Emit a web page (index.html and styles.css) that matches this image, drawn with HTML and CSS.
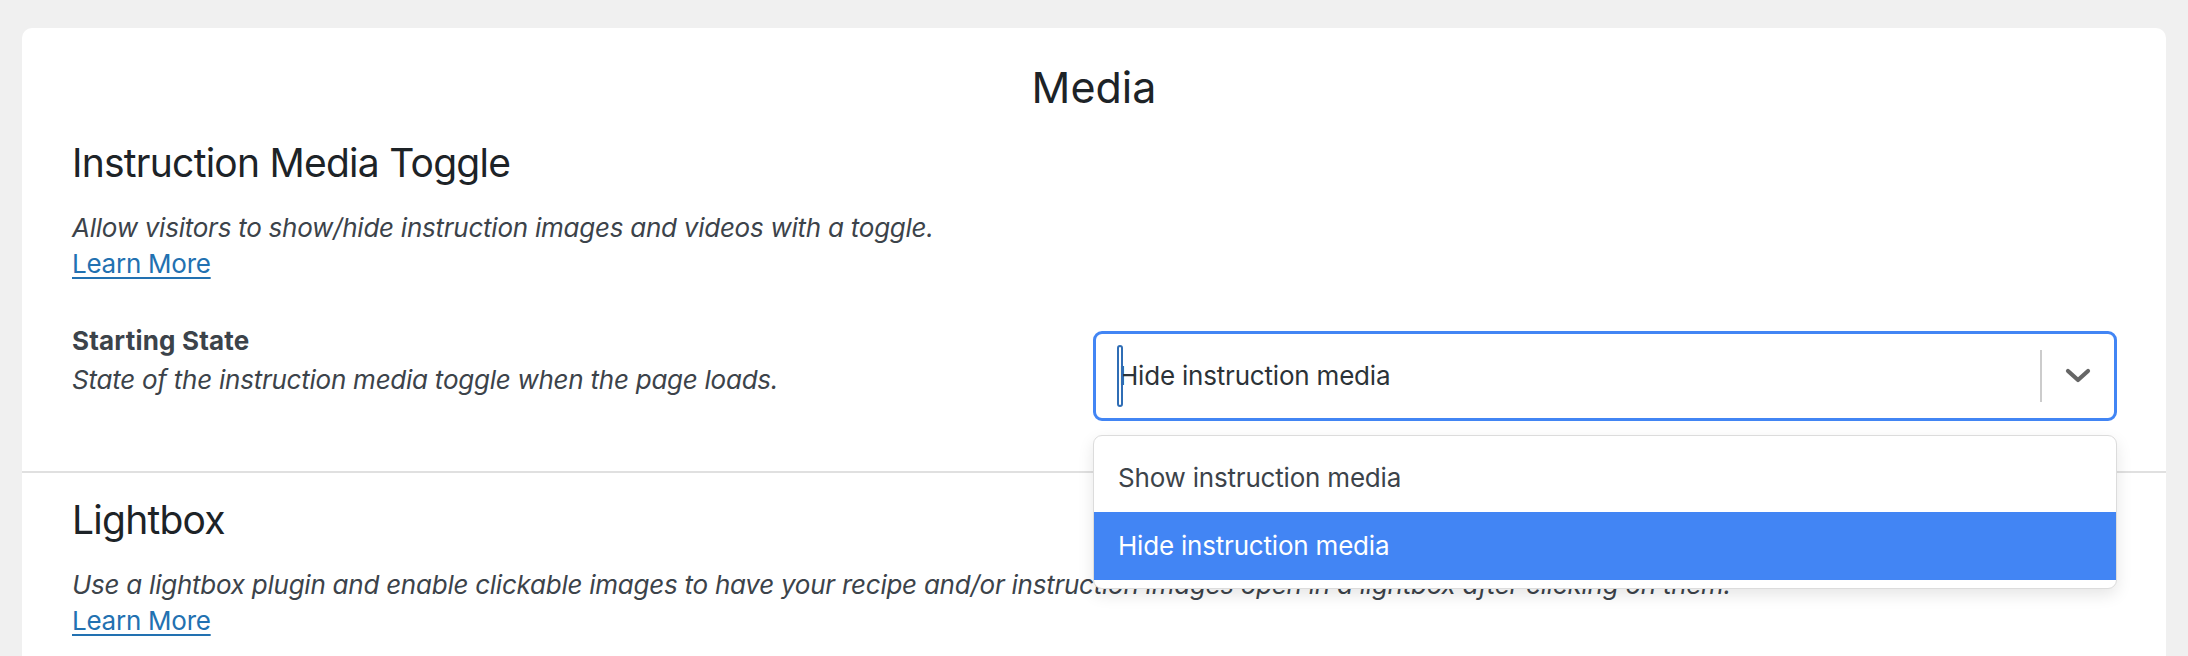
FILE: index.html
```html
<!DOCTYPE html>
<html lang="en">
<head>
    <meta charset="UTF-8">
    <title>Media Settings</title>
    <link rel="stylesheet" href="styles.css">
</head>
<body>
    <div class="card">
        <h1 class="card-title">Media</h1>

        <section class="settings-section">
            <h2>Instruction Media Toggle</h2>
            <p class="section-desc">
                Allow visitors to show/hide instruction images and videos with a toggle.<br>
                <a href="#">Learn More</a>
            </p>

            <div class="setting-row">
                <div class="setting-info">
                    <div class="setting-label">Starting State</div>
                    <div class="setting-desc">State of the instruction media toggle when the page loads.</div>
                </div>
                <div class="select-wrap">
                    <div class="select-control">
                        <div class="select-value">
                            <span class="select-input"></span>
                            Hide instruction media
                        </div>
                        <span class="select-separator"></span>
                        <div class="select-indicator">
                            <svg width="26" height="16" viewBox="0 0 26 16">
                                <path d="M3 3 L13 12 L23 3" fill="none" stroke="#666" stroke-width="4.2" stroke-linecap="round" stroke-linejoin="round"/>
                            </svg>
                        </div>
                    </div>
                    <div class="select-menu">
                        <div class="select-option">Show instruction media</div>
                        <div class="select-option selected">Hide instruction media</div>
                    </div>
                </div>
            </div>
        </section>

        <section class="settings-section">
            <h2>Lightbox</h2>
            <p class="section-desc">
                Use a lightbox plugin and enable clickable images to have your recipe and/or instruction images open in a lightbox after clicking on them.<br>
                <a href="#">Learn More</a>
            </p>
        </section>
    </div>
</body>
</html>
```

FILE: styles.css
```css
body {
    margin: 0;
    padding: 28px 22px 0;
    background-color: #f0f0f0;
    font-family: Inter, "Noto Sans", sans-serif;
    color: #3c434a;
}
.card {
    background-color: #ffffff;
    border-radius: 10px;
    padding-top: 30px;
    min-height: 700px;
}
.card-title {
    margin: 0;
    text-align: center;
    font-size: 43px;
    font-weight: 400;
    line-height: 58px;
    color: #1d2327;
}
.settings-section {
    padding: 22px 49px 50px 50px;
}
.settings-section + .settings-section {
    border-top: 2px solid #e0e0e0;
}
.settings-section h2 {
    margin: 0;
    font-size: 39px;
    font-weight: 400;
    line-height: 50px;
    letter-spacing: -0.75px;
    color: #1d2327;
}
.section-desc {
    margin: 22px 0 0;
    font-size: 26px;
    line-height: 36px;
    font-style: italic;
    letter-spacing: -0.25px;
}
.section-desc a {
    color: #2271b1;
    font-style: normal;
    text-decoration-thickness: 2px;
    text-underline-offset: 4px;
}
.setting-row {
    display: flex;
    align-items: flex-start;
    margin-top: 39px;
}
.setting-info {
    flex: 1;
}
.setting-label {
    font-size: 26px;
    font-weight: 700;
    line-height: 39px;
    letter-spacing: 0.2px;
}
.setting-desc {
    font-size: 26px;
    font-style: italic;
    line-height: 39px;
    letter-spacing: -0.25px;
}
.select-wrap {
    position: relative;
    width: 1024px;
    margin-top: 10px;
}
.select-control {
    display: flex;
    align-items: center;
    box-sizing: border-box;
    height: 90px;
    border: 3px solid #4285f4;
    border-radius: 9px;
    background-color: #ffffff;
}
.select-value {
    position: relative;
    flex: 1;
    padding-left: 23px;
    font-size: 26px;
    line-height: 36px;
    letter-spacing: -0.2px;
    color: #2c3338;
}
.select-input {
    position: absolute;
    left: 21px;
    top: -13px;
    box-sizing: border-box;
    width: 6px;
    height: 62px;
    border: 2px solid #2f6db5;
    border-radius: 3px;
}
.select-separator {
    width: 2px;
    height: 52px;
    background-color: #cccccc;
}
.select-indicator {
    display: flex;
    align-items: center;
    justify-content: center;
    width: 72px;
    height: 100%;
}
.select-menu {
    position: absolute;
    top: 104px;
    left: 0;
    right: 0;
    z-index: 10;
    padding: 8px 0;
    border: 1px solid #dcdcdc;
    border-radius: 9px;
    background-color: #ffffff;
    box-shadow: 0 6px 16px rgba(0, 0, 0, 0.1);
}
.select-option {
    padding-left: 24px;
    font-size: 26px;
    line-height: 68px;
    letter-spacing: -0.2px;
    color: #3c434a;
}
.select-option.selected {
    background-color: #4285f4;
    color: #ffffff;
}
```
